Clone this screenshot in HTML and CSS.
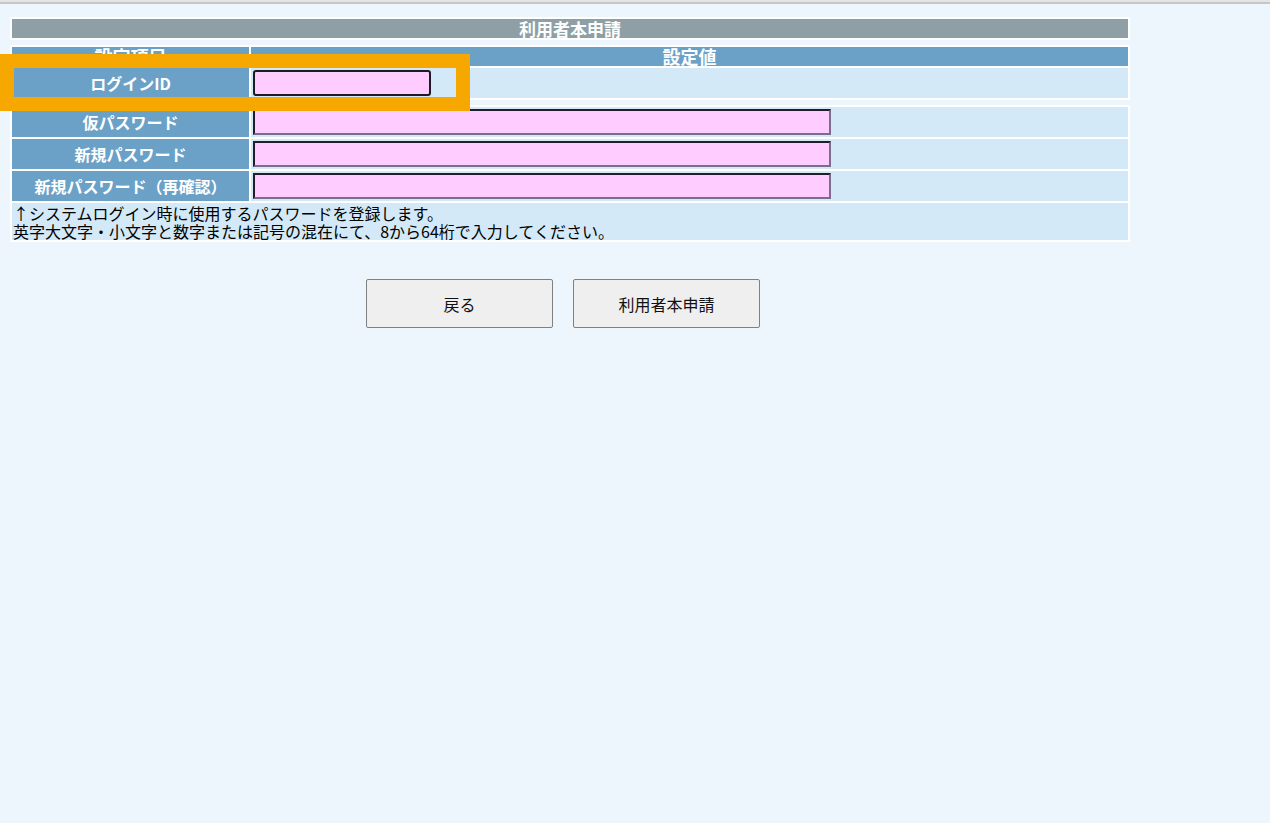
FILE: index.html
```html
<!DOCTYPE html>
<html lang="ja">
<head>
    <meta charset="UTF-8">
    <title>利用者本申請</title>
    <link rel="stylesheet" href="styles.css">
</head>
<body>
    <div class="topbar"></div>

    <div class="page">
        <table class="form-table title-table">
            <tr>
                <th class="title">利用者本申請</th>
            </tr>
        </table>

        <table class="form-table">
            <tr class="head-row">
                <th class="label-col">設定項目</th>
                <th>設定値</th>
            </tr>
            <tr class="field-row">
                <th class="label">ログインID</th>
                <td class="value"><input type="text" class="input login-id"></td>
            </tr>
        </table>

        <table class="form-table">
            <tr class="field-row">
                <th class="label label-col">仮パスワード</th>
                <td class="value"><input type="password" class="input password"></td>
            </tr>
            <tr class="field-row">
                <th class="label">新規パスワード</th>
                <td class="value"><input type="password" class="input password"></td>
            </tr>
            <tr class="field-row">
                <th class="label">新規パスワード（再確認）</th>
                <td class="value"><input type="password" class="input password"></td>
            </tr>
            <tr class="note-row">
                <td colspan="2" class="note">↑システムログイン時に使用するパスワードを登録します。<br>英字大文字・小文字と数字または記号の混在にて、8から64桁で入力してください。</td>
            </tr>
        </table>

        <div class="actions">
            <button class="btn">戻る</button>
            <button class="btn">利用者本申請</button>
        </div>
    </div>

    <div class="highlight"></div>
</body>
</html>
```

FILE: styles.css
```css
* {
    box-sizing: border-box;
}

body {
    margin: 0;
    min-height: 823px;
    background-color: #edf6fd;
    font-family: "Noto Sans CJK JP", "Noto Sans", sans-serif;
    position: relative;
}

.topbar {
    height: 4px;
    background-color: #e4e4e4;
    border-bottom: 2px solid #c6c6c6;
}

.page {
    padding: 13px 0 0 10px;
}

.form-table {
    width: 1120px;
    border-collapse: separate;
    border-spacing: 2px;
    background-color: #fff;
    margin-bottom: 5px;
}

.form-table th,
.form-table td {
    padding: 0;
}

.title {
    height: 19px;
    background-color: #8ea0a6;
    color: #fff;
    font-size: 17px;
    font-weight: bold;
    line-height: 19px;
}

.head-row th {
    height: 19px;
    background-color: #6ba1c7;
    color: #fff;
    font-size: 18px;
    font-weight: bold;
    line-height: 19px;
}

.label-col {
    width: 237px;
}

.field-row th,
.field-row td {
    height: 30px;
}

.label {
    background-color: #6ba1c7;
    color: #fff;
    font-size: 16px;
    font-weight: bold;
    line-height: 18px;
}

.value {
    background-color: #d3e9f7;
    padding: 0 2px !important;
    vertical-align: middle;
}

.input {
    display: block;
    height: 26px;
    margin: 0;
    background-color: #ffccff;
    font-size: 14px;
    outline: none;
}

.login-id {
    width: 178px;
    border: 2px solid #1c1a22;
    border-radius: 3px;
}

.password {
    width: 578px;
    border: 2px solid;
    border-color: #221c2c #78708a #78708a #221c2c;
}

.note {
    height: 37px;
    background-color: #d3e9f7;
    color: #000;
    font-size: 16px;
    line-height: 18px;
    padding-left: 1px !important;
    vertical-align: middle;
}

.actions {
    display: flex;
    gap: 20px;
    padding: 32px 0 0 356px;
}

.btn {
    width: 187px;
    height: 49px;
    background-color: #efefef;
    border: 1px solid #808080;
    border-radius: 2px;
    color: #111;
    font-family: "Noto Sans CJK JP", "Noto Sans", sans-serif;
    font-size: 16px;
    cursor: pointer;
}

.highlight {
    position: absolute;
    left: 0;
    top: 54px;
    width: 470px;
    height: 57px;
    border: 14px solid #f6a800;
}
```
